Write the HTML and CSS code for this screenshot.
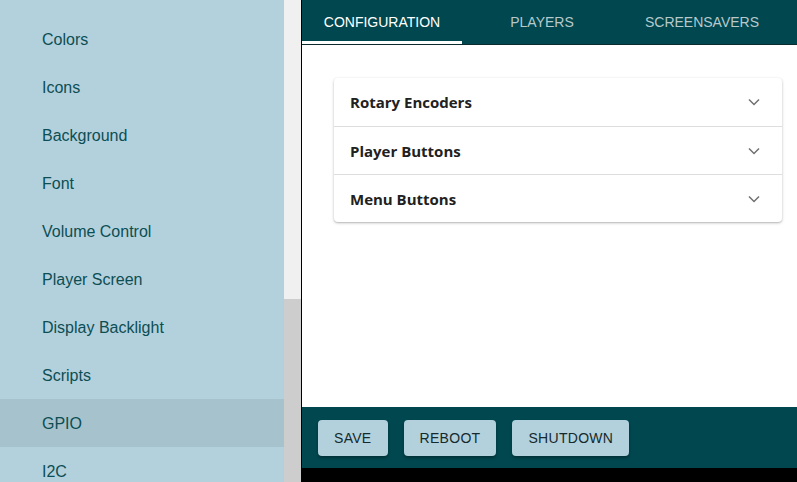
FILE: index.html
```html
<!DOCTYPE html>
<html lang="en">
<head>
    <meta charset="UTF-8">
    <title>Settings</title>
    <link rel="stylesheet" href="styles.css">
</head>
<body>
    <nav class="sidebar">
        <ul class="menu">
            <li>Colors</li>
            <li>Icons</li>
            <li>Background</li>
            <li>Font</li>
            <li>Volume Control</li>
            <li>Player Screen</li>
            <li>Display Backlight</li>
            <li>Scripts</li>
            <li class="active">GPIO</li>
            <li>I2C</li>
        </ul>
    </nav>
    <div class="scrollbar"><div class="thumb"></div></div>

    <main class="panel">
        <div class="tabs">
            <div class="tab active">Configuration</div>
            <div class="tab">Players</div>
            <div class="tab">Screensavers</div>
        </div>

        <section class="content">
            <div class="card">
                <div class="row">
                    <span>Rotary Encoders</span>
                    <svg class="chev" viewBox="0 0 24 24"><path d="M6 9l6 6 6-6"/></svg>
                </div>
                <div class="row">
                    <span>Player Buttons</span>
                    <svg class="chev" viewBox="0 0 24 24"><path d="M6 9l6 6 6-6"/></svg>
                </div>
                <div class="row">
                    <span>Menu Buttons</span>
                    <svg class="chev" viewBox="0 0 24 24"><path d="M6 9l6 6 6-6"/></svg>
                </div>
            </div>
        </section>

        <footer class="actions">
            <button class="btn">Save</button>
            <button class="btn">Reboot</button>
            <button class="btn">Shutdown</button>
        </footer>
    </main>
</body>
</html>
```

FILE: styles.css
```css
* {
    margin: 0;
    padding: 0;
    box-sizing: border-box;
}

body {
    display: flex;
    height: 482px;
    overflow: hidden;
    background-color: #000;
    font-family: 'Liberation Sans', Arial, sans-serif;
}

.sidebar {
    width: 284px;
    height: 100%;
    background-color: #b3d1dc;
    padding-top: 15px;
}

.menu {
    list-style: none;
}

.menu li {
    height: 48px;
    line-height: 49px;
    overflow: hidden;
    padding-left: 42px;
    font-size: 16px;
    color: #0c4e54;
}

.menu li.active {
    background-color: #a6c3cd;
}

.scrollbar {
    width: 17px;
    height: 100%;
    background-color: #f0f0f0;
    padding-top: 299px;
}

.thumb {
    height: 100%;
    background-color: #cdcdcd;
}

.panel {
    flex: 1;
    display: flex;
    flex-direction: column;
    height: 468px;
    margin-left: 1px;
    background-color: #fff;
}

.tabs {
    display: flex;
    height: 45px;
    background-color: #00474f;
    border-bottom: 1px solid #0b2b2e;
}

.tab {
    width: 160px;
    text-align: center;
    padding-top: 14px;
    font-size: 14px;
    text-transform: uppercase;
    color: #b7c9cb;
}

.tab.active {
    color: #fff;
    border-bottom: 3px solid #fff;
}

.content {
    flex: 1;
    padding: 33px 15px 0 32px;
}

.card {
    background-color: #fff;
    border-radius: 4px;
    box-shadow: 0 1px 3px rgba(0, 0, 0, 0.25), 0 1px 1px rgba(0, 0, 0, 0.08);
}

.row {
    display: flex;
    align-items: center;
    justify-content: space-between;
    height: 48px;
    padding: 0 18px 0 16px;
    font-family: 'Open Sans', sans-serif;
    font-weight: bold;
    font-size: 15px;
    color: #212121;
}

.row + .row {
    border-top: 1px solid #dedede;
}

.chev {
    width: 20px;
    height: 20px;
    fill: none;
    stroke: #707070;
    stroke-width: 1.8;
}

.actions {
    display: flex;
    gap: 16px;
    height: 61px;
    padding: 13px 16px 0;
    background-color: #00474f;
}

.btn {
    height: 36px;
    padding: 0 16px;
    border: none;
    border-radius: 4px;
    background-color: #b3d1dc;
    color: #142a2d;
    font-family: 'Liberation Sans', Arial, sans-serif;
    font-size: 14px;
    letter-spacing: 0.3px;
    text-transform: uppercase;
    box-shadow: 0 2px 3px rgba(0, 0, 0, 0.3);
}
```
